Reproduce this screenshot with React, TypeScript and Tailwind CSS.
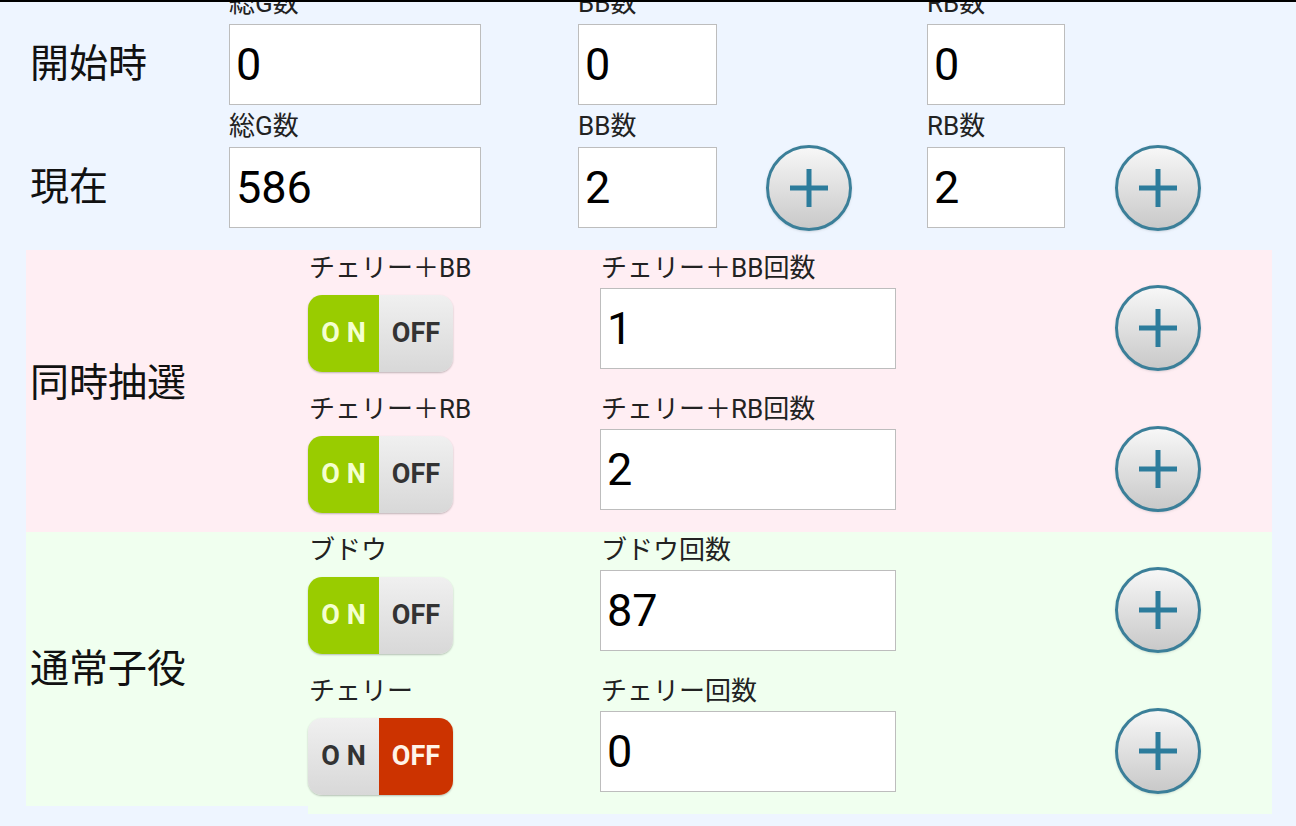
import React from "react";

const font = { fontFamily: 'Roboto, "Noto Sans CJK JP", sans-serif' };

const PlusButton = () => (
  <button className="w-[86px] h-[86px] rounded-full border-[3px] border-[#3b7f99] bg-gradient-to-b from-[#f7f7f7] to-[#c9c9c9] flex items-center justify-center shadow-sm">
    <svg width="38" height="38" viewBox="0 0 38 38">
      <rect x="16.5" y="0" width="5" height="38" fill="#2c7c9c" />
      <rect x="0" y="16.5" width="38" height="5" fill="#2c7c9c" />
    </svg>
  </button>
);

const NumberBox = ({ value, width }: { value: string; width: string }) => (
  <div className={`${width} h-[81px] bg-white border border-[#bdbdbd] flex items-center pl-[6px] text-[45px] text-black leading-none`}>
    {value}
  </div>
);

const Field = ({ caption, value, width }: { caption: string; value: string; width: string }) => (
  <div className="flex flex-col">
    <div className="h-[42px] flex items-center text-[26px] text-[#222] leading-none">{caption}</div>
    <NumberBox value={value} width={width} />
  </div>
);

const Toggle = ({ on }: { on: boolean }) => (
  <div className="w-[145px] h-[77px] rounded-[14px] overflow-hidden flex shadow-[0_1px_2px_rgba(0,0,0,0.25)] font-bold text-[27px] leading-none">
    <div
      className={
        on
          ? "w-[71px] bg-[#99cc00] text-[#f4ffd0] flex items-center justify-center tracking-[7px] pl-[7px]"
          : "w-[71px] bg-gradient-to-b from-[#f0f0f0] to-[#d8d8d8] text-[#333] flex items-center justify-center tracking-[7px] pl-[7px]"
      }
    >
      ON
    </div>
    <div
      className={
        on
          ? "flex-1 bg-gradient-to-b from-[#f0f0f0] to-[#d8d8d8] text-[#333] flex items-center justify-center"
          : "flex-1 bg-[#cc3300] text-[#fff4e8] flex items-center justify-center"
      }
    >
      OFF
    </div>
  </div>
);

const LotRow = ({ name, count, on }: { name: string; count: string; on: boolean }) => (
  <div className="flex h-[141px]">
    <div className="flex flex-col w-[292px]">
      <div className="h-[36px] flex items-center pl-[1px] text-[26px] text-[#222] leading-none">{name}</div>
      <div className="pt-[9px]">
        <Toggle on={on} />
      </div>
    </div>
    <div className="flex flex-col w-[515px]">
      <div className="h-[36px] mb-[2px] flex items-center pl-[1px] text-[26px] text-[#222] leading-none">{name}回数</div>
      <NumberBox value={count} width="w-[296px]" />
    </div>
    <div className="pt-[35px]">
      <PlusButton />
    </div>
  </div>
);

const Section = ({
  title,
  bg,
  leftH,
  shift,
  rows,
}: {
  title: string;
  bg: string;
  leftH: string;
  shift: string;
  rows: { name: string; count: string; on: boolean }[];
}) => (
  <div className="flex items-start ml-[26px] w-[1246px]">
    <div className={`${bg} ${leftH} w-[282px] flex items-center pl-[4px] text-[39px] text-[#111] leading-none`}>
      <span className={shift}>{title}</span>
    </div>
    <div className={`${bg} flex-1 flex flex-col`}>
      {rows.map((r) => (
        <LotRow key={r.name} {...r} />
      ))}
    </div>
  </div>
);

export default function App() {
  return (
    <div className="w-[1296px] h-[826px] overflow-hidden bg-[#eef5ff]" style={font}>
      <div className="h-[2px] bg-black relative z-10" />
      <div className="-mt-[20px]">
        <div className="flex items-end pl-[30px]">
          <div className="w-[199px] h-[81px] flex items-center text-[39px] text-[#111] leading-none">開始時</div>
          <Field caption="総G数" value="0" width="w-[252px]" />
          <div className="w-[97px]" />
          <Field caption="BB数" value="0" width="w-[139px]" />
          <div className="w-[210px]" />
          <Field caption="RB数" value="0" width="w-[138px]" />
        </div>
        <div className="flex items-end pl-[30px]">
          <div className="w-[199px] h-[81px] flex items-center text-[39px] text-[#111] leading-none">現在</div>
          <Field caption="総G数" value="586" width="w-[252px]" />
          <div className="w-[97px]" />
          <Field caption="BB数" value="2" width="w-[139px]" />
          <div className="w-[49px]" />
          <div className="self-end mb-[-3px]">
            <PlusButton />
          </div>
          <div className="w-[75px]" />
          <Field caption="RB数" value="2" width="w-[138px]" />
          <div className="w-[50px]" />
          <div className="self-end mb-[-3px]">
            <PlusButton />
          </div>
        </div>
        <div className="h-[22px]" />
        <Section
          title="同時抽選"
          bg="bg-[#ffeef3]"
          leftH="h-[282px]"
          shift="-mt-[16px]"
          rows={[
            { name: "チェリー＋BB", count: "1", on: true },
            { name: "チェリー＋RB", count: "2", on: true },
          ]}
        />
        <Section
          title="通常子役"
          bg="bg-[#f0ffef]"
          leftH="h-[274px]"
          shift="mt-0"
          rows={[
            { name: "ブドウ", count: "87", on: true },
            { name: "チェリー", count: "0", on: false },
          ]}
        />
      </div>
    </div>
  );
}
